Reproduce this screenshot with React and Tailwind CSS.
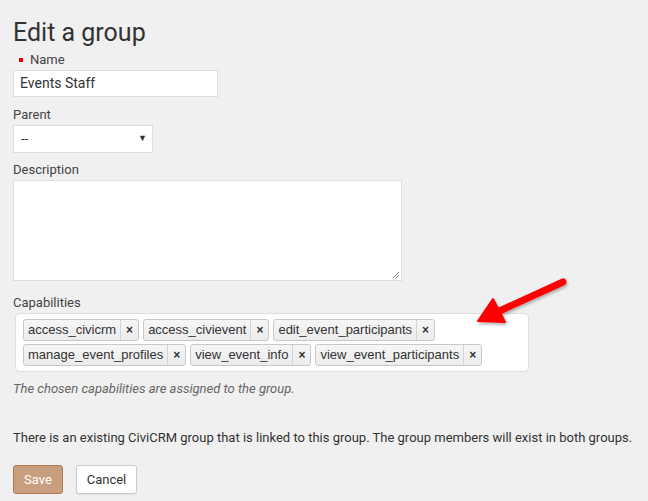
import React from "react";

const tagsRow = [
  "access_civicrm",
  "access_civievent",
  "edit_event_participants",
  "manage_event_profiles",
  "view_event_info",
  "view_event_participants",
];

function Tag({ label }) {
  return (
    <div className="flex h-[22px] items-stretch rounded-[3px] border border-[#c8c8c8] bg-gradient-to-b from-[#f6f6f6] to-[#ececec] text-[13px] text-[#333] [font-family:'Liberation_Sans',Arial,sans-serif]">
      <span className="flex items-center px-[4px]">{label}</span>
      <span className="flex w-[18px] items-center justify-center border-l border-[#d4d4d4] text-[12px] font-bold text-[#333]">×</span>
    </div>
  );
}

export default function App() {
  return (
    <div className="relative min-h-[501px] w-[648px] bg-[#f0f0f0] px-[13px] pt-[17px] text-[#333] [font-family:Roboto,'Liberation_Sans',sans-serif]">
      <h1 className="text-[25px] leading-[32px] text-[#333]">Edit a group</h1>
      <div className="mt-[3px] flex items-center text-[13px] leading-[15px] text-[#444]">
        <span className="ml-[6px] mr-[7px] inline-block h-[4px] w-[4px] bg-[#e00]" />
        Name
      </div>
      <div className="mt-[3px] flex h-[27px] w-[205px] items-center border border-[#ddd] bg-white px-[6px] text-[14px] text-[#333]">
        Events Staff
      </div>

      <div className="mt-[10px] text-[13px] leading-[15px] text-[#444]">Parent</div>
      <div className="mt-[3px] flex h-[28px] w-[140px] items-center justify-between border border-[#ddd] bg-white pl-[7px] pr-[5px] text-[13px] text-[#333]">
        <span>--</span>
        <span className="text-[9px] text-[#333]">▼</span>
      </div>

      <div className="mt-[9px] text-[13px] leading-[15px] text-[#444]">Description</div>
      <div className="relative mt-[3px] h-[101px] w-[389px] border border-[#ddd] bg-white">
        <svg className="absolute bottom-[1px] right-[1px]" width="8" height="8" viewBox="0 0 8 8">
          <path d="M7 1 L1 7 M7 4 L4 7" stroke="#888" strokeWidth="1" />
        </svg>
      </div>

      <div className="mt-[14px] text-[13px] leading-[15px] text-[#444]">Capabilities</div>
      <div className="ml-[2px] mt-[3px] flex w-[514px] flex-wrap content-start gap-x-[4px] gap-y-[3px] rounded-[4px] border border-[#ddd] bg-white px-[7px] pb-[5px] pt-[5px]">
        {tagsRow.map((t) => (
          <Tag key={t} label={t} />
        ))}
      </div>
      <p className="mt-[9px] text-[13px] italic leading-[16px] text-[#666]">
        The chosen capabilities are assigned to the group.
      </p>

      <p className="mt-[33px] text-[13px] leading-[16px] text-[#333]">
        There is an existing CiviCRM group that is linked to this group. The group members will exist in both groups.
      </p>

      <div className="mt-[19px] flex gap-[13px]">
        <button className="h-[29px] w-[50px] rounded-[3px] border border-[#b07a55] bg-[#c99e7f] text-[13px] text-white">
          Save
        </button>
        <button className="h-[29px] w-[61px] rounded-[3px] border border-[#ccc] bg-white text-[13px] text-[#333] shadow-[0_1px_1px_rgba(0,0,0,0.08)]">
          Cancel
        </button>
      </div>

      <svg className="absolute left-[470px] top-[272px]" width="100" height="60" viewBox="0 0 100 60">
        <defs>
          <filter id="sh" x="-20%" y="-20%" width="140%" height="140%">
            <feDropShadow dx="1" dy="2" stdDeviation="1.5" floodColor="#000" floodOpacity="0.3" />
          </filter>
        </defs>
        <g filter="url(#sh)">
          <line x1="93" y1="10" x2="25" y2="41" stroke="#f00" strokeWidth="7" strokeLinecap="round" />
          <path d="M8 49 L23 27 L35 50 Z" fill="#f00" stroke="#f00" strokeWidth="2" strokeLinejoin="round" />
        </g>
      </svg>
    </div>
  );
}
